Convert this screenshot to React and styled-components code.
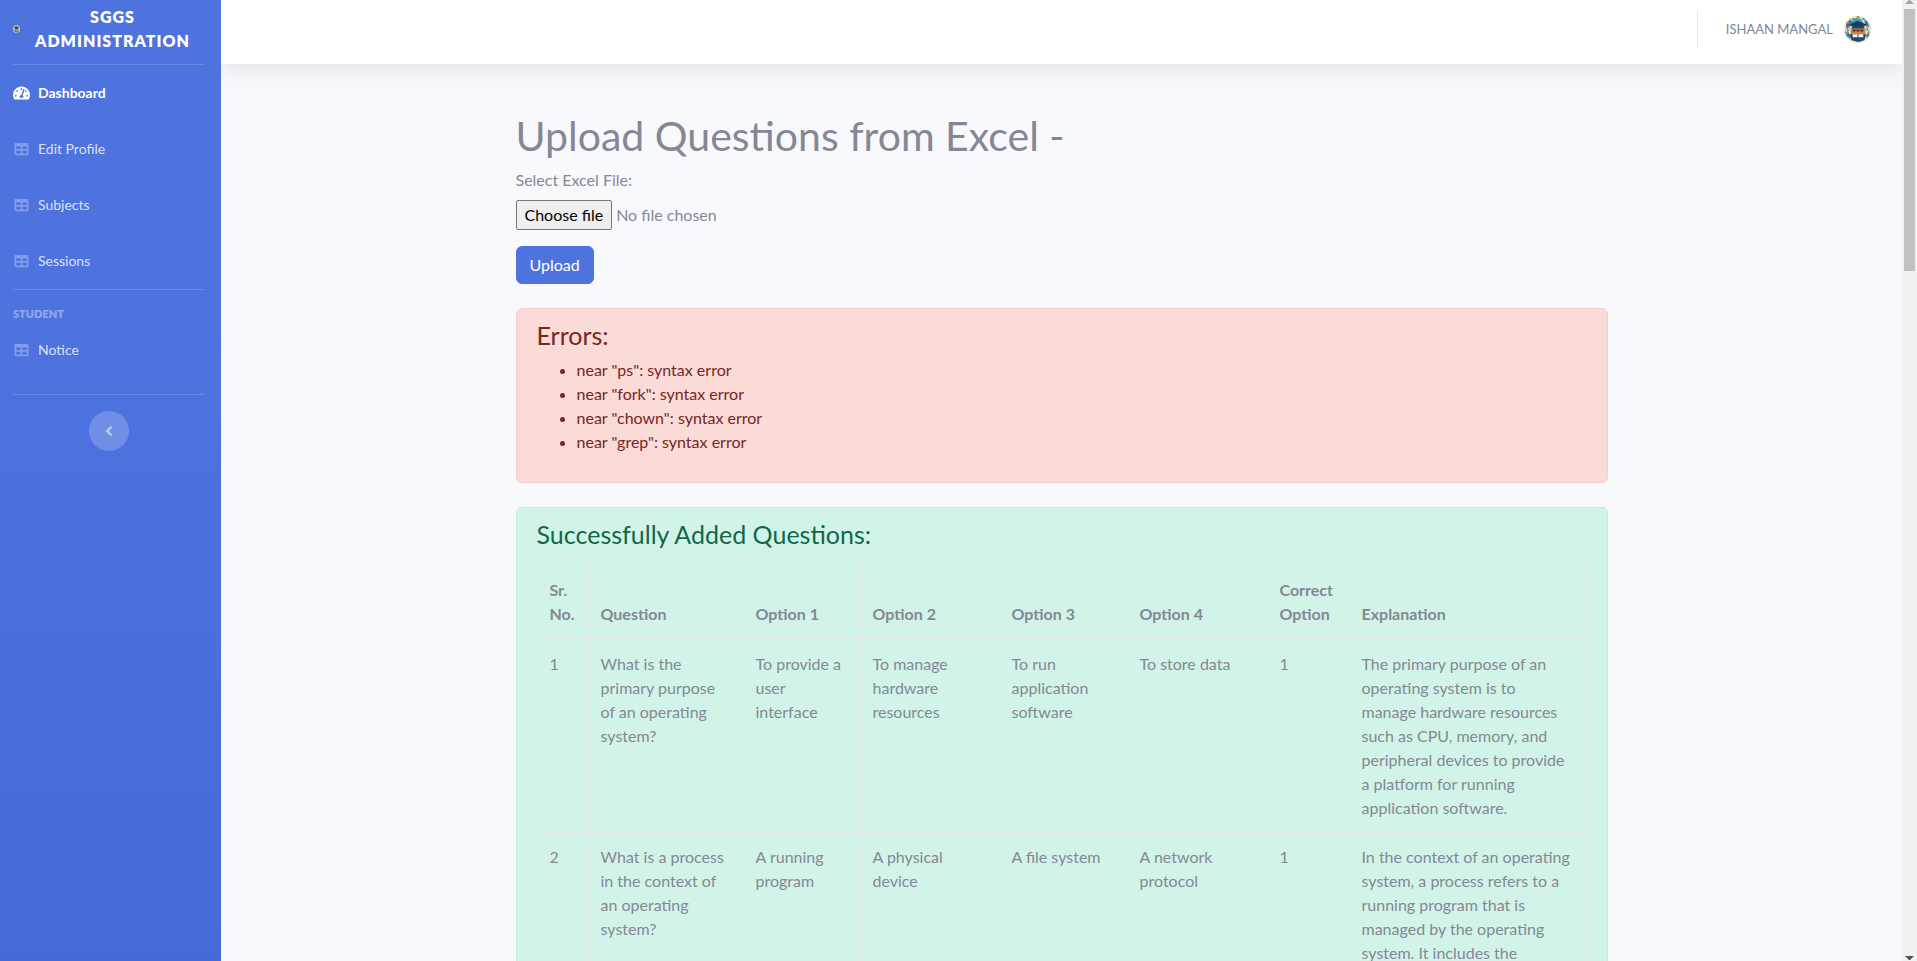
import React from "react";
import styled, { createGlobalStyle } from "styled-components";
import { FaTachometerAlt, FaTable, FaAngleLeft } from "react-icons/fa";

const GlobalStyle = createGlobalStyle`
  *, *::before, *::after { box-sizing: border-box; }
  html { scrollbar-width: none; }
  body {
    margin: 0;
    background: #f8f9fc;
    color: #858796;
    font: 400 16px/24px "Lato", "Nunito", sans-serif;
  }
`;

const Page = styled.div`
  display: flex;
  height: 100vh;
  overflow: hidden;
`;

/* ---------- sidebar ---------- */

const Sidebar = styled.nav`
  flex: 0 0 221px;
  min-width: 0;
  display: flex;
  flex-direction: column;
  background: linear-gradient(180deg, #4e73df 340px, #224abe 3400px);
  color: #fff;
`;

const Brand = styled.a`
  display: flex;
  align-items: center;
  gap: 14px;
  height: 64px;
  padding: 0 30px 6px 13px;
  color: #fff;
  font-weight: 800;
  letter-spacing: 1px;
  text-align: center;
  text-decoration: none;
  text-transform: uppercase;

  svg { flex: none; }
`;

const Divider = styled.hr`
  width: auto;
  height: 1px;
  margin: ${({ $spaced }) => ($spaced ? "16px" : "0")} 16px ${({ $spaced }) => ($spaced ? "16px" : "0")} 13px;
  border: 0;
  background: rgba(255, 255, 255, 0.15);
`;

const NavList = styled.ul`
  margin: 0;
  padding: 0;
  list-style: none;
`;

const NavLink = styled.a`
  display: flex;
  align-items: center;
  gap: 8px;
  height: 56px;
  padding: 0 16px 0 13px;
  color: ${({ $active }) => ($active ? "#fff" : "rgba(255, 255, 255, 0.8)")};
  font-size: 14px;
  font-weight: ${({ $active }) => ($active ? 700 : 400)};
  text-decoration: none;

  svg {
    width: 17px;
    height: ${({ $active }) => ($active ? "16px" : "14px")};
    color: ${({ $active }) => ($active ? "#fff" : "rgba(255, 255, 255, 0.3)")};
  }
`;

const SectionHeading = styled.h2`
  margin: 16px 16px 0 13px;
  color: rgba(255, 255, 255, 0.4);
  font-size: 11px;
  font-weight: 800;
  line-height: 16px;
  text-transform: uppercase;
`;

const CollapseButton = styled.button`
  display: grid;
  place-items: center;
  width: 40px;
  height: 40px;
  margin-left: 89px;
  padding: 0;
  border: 0;
  border-radius: 50%;
  background: rgba(255, 255, 255, 0.2);
  color: rgba(255, 255, 255, 0.5);
  font-size: 16px;
  cursor: pointer;
`;

/* ---------- top bar ---------- */

const Content = styled.div`
  flex: 1;
  min-width: 0;
  display: flex;
  flex-direction: column;
  overflow: hidden;
`;

const Topbar = styled.header`
  flex: 0 0 64px;
  display: flex;
  justify-content: flex-end;
  align-items: flex-start;
  padding: 10px 30px 0 16px;
  background: #fff;
  box-shadow: 0 2px 28px rgba(58, 59, 69, 0.15);
`;

const UserLink = styled.a`
  display: flex;
  align-items: center;
  gap: 10px;
  height: 38px;
  padding-left: 28px;
  border-left: 1px solid #e3e6f0;
  color: #858796;
  font-size: 13px;
  text-decoration: none;
  text-transform: uppercase;
`;

/* ---------- main area ---------- */

const Main = styled.main`
  flex: 1;
  width: 100%;
  max-width: 1140px;
  margin: 0 auto;
  padding: 48px 24px 0;
`;

const Title = styled.h1`
  margin: 0 0 8px;
  font-size: 41px;
  font-weight: 400;
  line-height: 48px;
`;

const UploadForm = styled.form`
  display: flex;
  flex-direction: column;
  align-items: flex-start;
  margin-bottom: 24px;
`;

const FieldLabel = styled.label`
  margin-bottom: 8px;
`;

const FilePicker = styled.div`
  position: relative;
  display: flex;
  align-items: center;
  gap: 4px;
  margin-bottom: 16px;
`;

const FileInput = styled.input`
  position: absolute;
  inset: 0;
  width: 100%;
  opacity: 0;
  cursor: pointer;
`;

const FileButton = styled.span`
  padding: 2px 8px;
  border: 1px solid #767676;
  border-radius: 2px;
  background: #efefef;
  color: #000;
`;

const UploadButton = styled.button`
  padding: 6px 13px;
  border: 1px solid #4e73df;
  border-radius: 6px;
  background: #4e73df;
  color: #fff;
  font: inherit;
  cursor: pointer;
`;

const tones = {
  danger: { text: "#78261f", fill: "#fadbd8", line: "#f8ccc8" },
  success: { text: "#0f6848", fill: "#d2f4e8", line: "#bff0de" },
};

const Alert = styled.section`
  margin-bottom: 24px;
  padding: 12px 20px;
  border: 1px solid ${({ $tone }) => tones[$tone].line};
  border-radius: 6px;
  background: ${({ $tone }) => tones[$tone].fill};
  color: ${({ $tone }) => tones[$tone].text};
`;

const AlertTitle = styled.h2`
  margin: 0 0 8px;
  font-size: 25px;
  font-weight: 400;
  line-height: 29px;
`;

const ErrorList = styled.ul`
  margin: 0 0 16px;
  padding-left: 40px;
`;

const QuestionTable = styled.table`
  width: 100%;
  margin: 16px 0;
  border-collapse: collapse;
  table-layout: fixed;
  color: #858796;

  th, td {
    padding: 12px;
    border: 1px solid #e3e6f0;
    text-align: left;
    vertical-align: top;
  }
  td:last-child { padding-right: 14px; }
  thead th {
    border-bottom-width: 2px;
    font-weight: 700;
    vertical-align: bottom;
  }
  tbody tr { height: 193px; }
`;

const Column = styled.col`
  width: ${({ $width }) => ($width ? `${$width}px` : "auto")};
`;

/* ---------- scroll bar ---------- */

const ScrollTrack = styled.div`
  flex: 0 0 15px;
  display: flex;
  flex-direction: column;
  align-items: center;
  justify-content: space-between;
  background: #f1f1f1;
`;

const ScrollThumb = styled.div`
  width: 11px;
  height: 262px;
  margin: 4px 0 auto;
  background: #c1c1c1;
`;

const Logo = ({ width, height }) => (
  <svg width={width} height={height} viewBox="0 0 30 30" preserveAspectRatio="none" role="img" aria-label="Logo">
    <circle cx="15" cy="15" r="14.5" fill="#f3efdc" />
    <circle cx="15" cy="15" r="13.5" fill="#d5dfdc" />
    <path d="M3 9l4-4 3 2-3 5-3 3zM22 4l4 4 1 5-4-3zM2 17l4 1 1 6-3-2zM27 16l-3 5 1 3 2-3z" fill="#3c6f93" />
    <path d="M9 6c3-4 9-4 11 0l2 5H8z" fill="#43a99c" />
    <path d="M6 10l9-4 10 4-9 5z" fill="#1b3b66" />
    <path d="M9 12h13v5H9z" fill="#23496f" />
    <path d="M8 14h15v7H8z" fill="#d9822f" />
    <path d="M10 15h3v2h-3zM14 15h3v2h-3zM18 15h3v2h-3z" fill="#512f23" />
    <path d="M6 20h18l-2 6-6 2-7-2z" fill="#24476c" />
    <path d="M10 20h5v3h-5zM16 20h5v3h-5z" fill="#f4f7f8" />
    <path d="M5 12h2v2H5zM14 1h3v2h-3zM24 11h2v2h-2zM4 7h2v2H4zM25 18h2v2h-2zM7 4h2v2H7zM3 18h2v2H3z" fill="#e6873b" />
    <path d="M10 3h2v2h-2zM20 3h2v2h-2zM4 15h2v2H4zM24 14h2v2h-2zM6 22h2v2H6z" fill="#3d92ad" />
  </svg>
);

const Arrow = ({ up }) => (
  <svg width="9" height="5" viewBox="0 0 9 5" aria-hidden="true">
    <path d={up ? "M0 4L4 0h1l4 4z" : "M0 0h9L5 4H4z"} fill={up ? "#a3a3a3" : "#505050"} />
  </svg>
);

const errors = ["ps", "fork", "chown", "grep"];

const columns = [
  { label: "Sr. No.", width: 51 },
  { label: "Question", width: 155 },
  { label: "Option 1", width: 117 },
  { label: "Option 2", width: 139 },
  { label: "Option 3", width: 128 },
  { label: "Option 4", width: 140 },
  { label: "Correct Option", width: 82 },
  { label: "Explanation" },
];

const questions = [
  [
    "1",
    "What is the primary purpose of an operating system?",
    "To provide a user interface",
    "To manage hardware resources",
    "To run application software",
    "To store data",
    "1",
    "The primary purpose of an operating system is to manage hardware resources such as CPU, memory, and peripheral devices to provide a platform for running application software.",
  ],
  [
    "2",
    "What is a process in the context of an operating system?",
    "A running program",
    "A physical device",
    "A file system",
    "A network protocol",
    "1",
    "In the context of an operating system, a process refers to a running program that is managed by the operating system. It includes the",
  ],
];

export default function App() {
  return (
    <>
      <GlobalStyle />
      <Page>
        <Sidebar aria-label="Main">
          <Brand href="#">
            <Logo width={7} height={8} />
            <span>SGGS Administration</span>
          </Brand>
          <Divider />
          <NavList>
            <li><NavLink href="#" $active><FaTachometerAlt />Dashboard</NavLink></li>
            {["Edit Profile", "Subjects", "Sessions"].map((name) => (
              <li key={name}><NavLink href="#"><FaTable />{name}</NavLink></li>
            ))}
          </NavList>
          <Divider />
          <SectionHeading>Student</SectionHeading>
          <NavList>
            <li><NavLink href="#"><FaTable />Notice</NavLink></li>
          </NavList>
          <Divider $spaced />
          <CollapseButton type="button" aria-label="Collapse sidebar"><FaAngleLeft /></CollapseButton>
        </Sidebar>

        <Content>
          <Topbar>
            <UserLink href="#">
              Ishaan Mangal
              <Logo width={29} height={29} />
            </UserLink>
          </Topbar>

          <Main>
            <Title>Upload Questions from Excel -</Title>
            <UploadForm>
              <FieldLabel htmlFor="excel-file">Select Excel File:</FieldLabel>
              <FilePicker>
                <FileButton>Choose file</FileButton>
                <span>No file chosen</span>
                <FileInput id="excel-file" type="file" />
              </FilePicker>
              <UploadButton type="submit">Upload</UploadButton>
            </UploadForm>

            <Alert $tone="danger">
              <AlertTitle>Errors:</AlertTitle>
              <ErrorList>
                {errors.map((word) => <li key={word}>{`near "${word}": syntax error`}</li>)}
              </ErrorList>
            </Alert>

            <Alert $tone="success">
              <AlertTitle>Successfully Added Questions:</AlertTitle>
              <QuestionTable>
                <colgroup>
                  {columns.map((column) => <Column key={column.label} $width={column.width} />)}
                </colgroup>
                <thead>
                  <tr>{columns.map((column) => <th key={column.label} scope="col">{column.label}</th>)}</tr>
                </thead>
                <tbody>
                  {questions.map((cells) => (
                    <tr key={cells[0]}>{cells.map((cell, i) => <td key={i}>{cell}</td>)}</tr>
                  ))}
                </tbody>
              </QuestionTable>
            </Alert>
          </Main>
        </Content>

        <ScrollTrack aria-hidden="true">
          <Arrow up />
          <ScrollThumb />
          <Arrow />
        </ScrollTrack>
      </Page>
    </>
  );
}
